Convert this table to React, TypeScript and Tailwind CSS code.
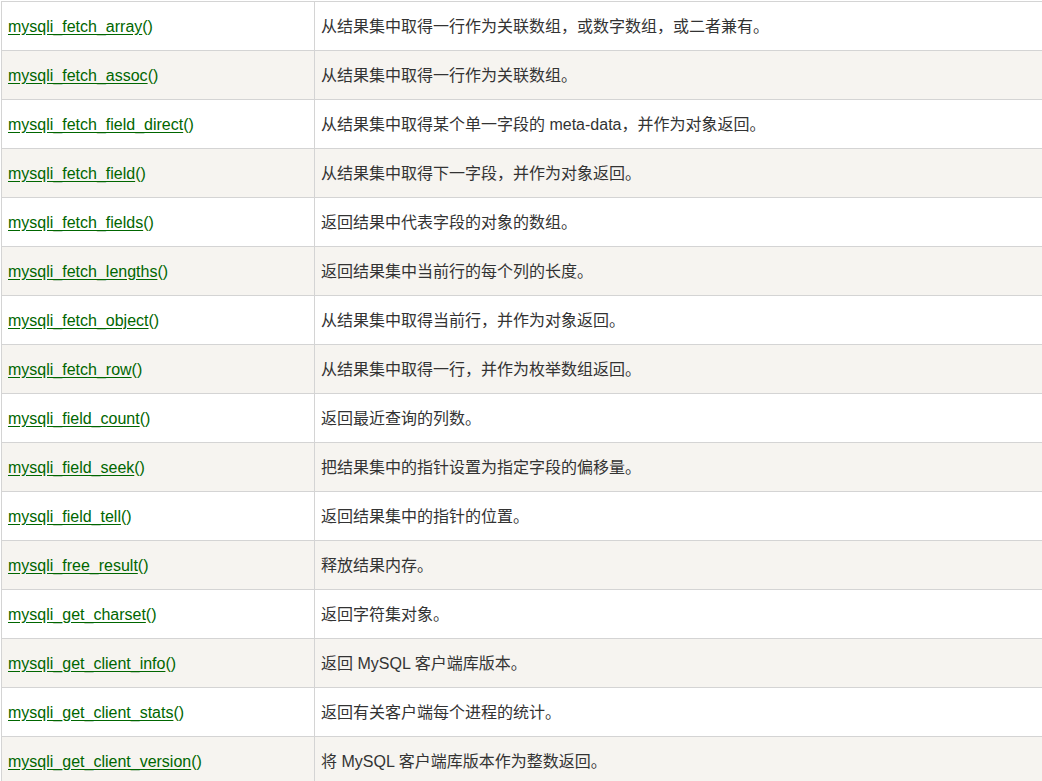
import React from 'react';

const rows: [string, string][] = [
  ['mysqli_fetch_array', '从结果集中取得一行作为关联数组，或数字数组，或二者兼有。'],
  ['mysqli_fetch_assoc', '从结果集中取得一行作为关联数组。'],
  ['mysqli_fetch_field_direct', '从结果集中取得某个单一字段的 meta-data，并作为对象返回。'],
  ['mysqli_fetch_field', '从结果集中取得下一字段，并作为对象返回。'],
  ['mysqli_fetch_fields', '返回结果中代表字段的对象的数组。'],
  ['mysqli_fetch_lengths', '返回结果集中当前行的每个列的长度。'],
  ['mysqli_fetch_object', '从结果集中取得当前行，并作为对象返回。'],
  ['mysqli_fetch_row', '从结果集中取得一行，并作为枚举数组返回。'],
  ['mysqli_field_count', '返回最近查询的列数。'],
  ['mysqli_field_seek', '把结果集中的指针设置为指定字段的偏移量。'],
  ['mysqli_field_tell', '返回结果集中的指针的位置。'],
  ['mysqli_free_result', '释放结果内存。'],
  ['mysqli_get_charset', '返回字符集对象。'],
  ['mysqli_get_client_info', '返回 MySQL 客户端库版本。'],
  ['mysqli_get_client_stats', '返回有关客户端每个进程的统计。'],
  ['mysqli_get_client_version', '将 MySQL 客户端库版本作为整数返回。'],
];

export default function App() {
  return (
    <div
      className="w-[1042px] h-[781px] overflow-hidden bg-white pl-px pt-px text-[16px] text-[#333333]"
      style={{ fontFamily: '"Liberation Sans", Arial, "Noto Sans CJK SC", sans-serif' }}
    >
      <div className="w-[1080px] border-l border-t border-[#d4d4d4]">
        {rows.map(([fn, desc], i) => (
          <div
            key={fn}
            className={
              'flex h-[49px] border-b border-[#d4d4d4] ' + (i % 2 === 1 ? 'bg-[#f6f4f0]' : 'bg-white')
            }
          >
            <div className="w-[313px] shrink-0 border-r border-[#d4d4d4] px-[6px] pt-[2px] flex items-center">
              <a href="#" className="text-[#006600] underline underline-offset-2">
                {fn}
              </a>
              <span className="text-[#006600]">()</span>
            </div>
            <div className="flex-1 px-[6px] pt-[2px] flex items-center">{desc}</div>
          </div>
        ))}
      </div>
    </div>
  );
}
